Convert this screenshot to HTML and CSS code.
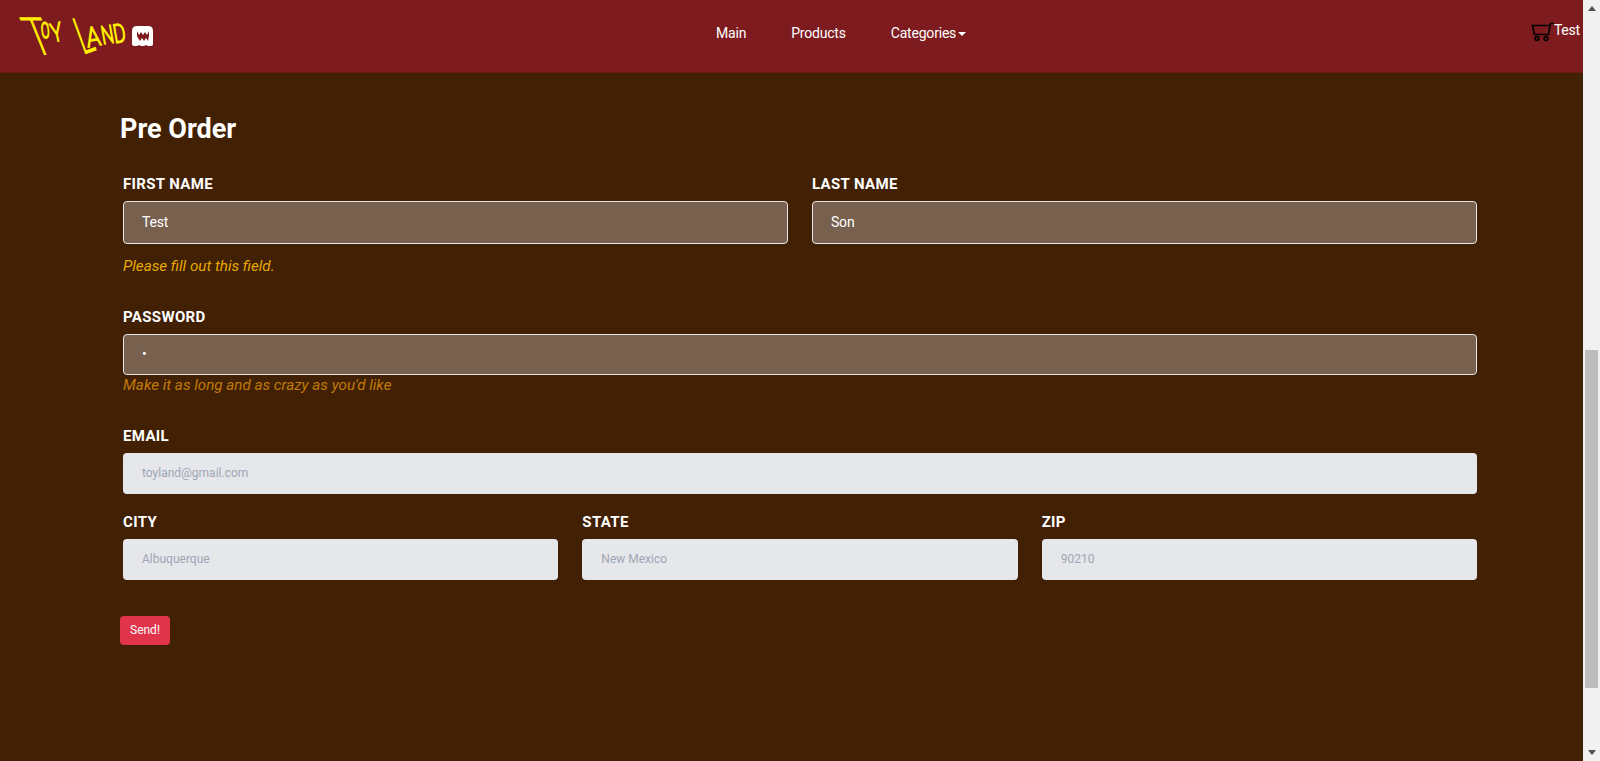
FILE: index.html
```html
<!DOCTYPE html>
<html>
<head>
	<meta charset="utf-8">
	<meta name="viewport" content="width=device-width, initial-scale=1">
	<title>Toy Land</title>
	<link rel="stylesheet" href="styles.css">
</head>
<body>

<div class="page">
	<nav class="navbar">
		<a class="logo" href="#">
			<svg width="160" height="72" viewBox="0 0 160 72">
				<g class="logo-text">
					<text transform="translate(33.700 54) skewX(22) scale(3.100 4.200)">T</text>
					<text transform="translate(42 38) rotate(-6) scale(1 1.750)">O</text>
					<text transform="translate(53 42) rotate(-12) scale(1.500 2.100)">Y</text>
					<text transform="translate(83 54) rotate(-20) scale(2.300 4.200)">L</text>
					<text transform="translate(88 47) rotate(-10) scale(1.900 2.200)">A</text>
					<text transform="translate(103 44) rotate(-10) scale(1.400 2)">N</text>
					<text transform="translate(115 43) rotate(-10) scale(1.500 2.100)">D</text>
				</g>
				<path d="M132 31 q0 -5 5 -5 h11 q5 0 5 5 v13 q0 2 -2 2 h-3 l-2 -1 -2 1 h-3 l-2 -1 -2 1 h-3 q-2 0 -2 -2 z" fill="#fff"/>
				<path d="M137 31 l2 4 2 -3 2 3 2 -3 2 3 2 -4 v5 l-1 5 -2 -3 -2 3 -2 -3 -2 3 -2 -3 -1 -2 z" fill="#7e1b1e"/>
			</svg>
		</a>
		<ul class="nav-links">
			<li><a href="#">Main</a></li>
			<li><a href="#">Products</a></li>
			<li><a href="#">Categories <span class="caret"></span></a></li>
		</ul>
		<div class="user">
			<svg width="23" height="20" viewBox="0 0 23 20" fill="none" stroke="#000" stroke-width="1.600">
				<path d="M23 1.500h-3.500l-2 11h-14l-2-9h18.200"/>
				<circle cx="6" cy="16.500" r="1.900"/>
				<circle cx="15" cy="16.500" r="1.900"/>
			</svg>
			<span>Test</span>
		</div>
	</nav>

	<main class="content">
		<h1>Pre Order</h1>
		<form>
			<div class="row first-row">
				<div class="field">
					<label>First Name</label>
					<input class="filled tall" type="text" value="Test">
					<p class="hint yellow">Please fill out this field.</p>
				</div>
				<div class="field">
					<label>Last Name</label>
					<input class="filled tall" type="text" value="Son">
				</div>
			</div>
			<div class="row password-row">
				<div class="field">
					<label>Password</label>
					<input class="filled" type="password" value="a">
					<p class="hint orange">Make it as long and as crazy as you'd like</p>
				</div>
			</div>
			<div class="row email-row">
				<div class="field">
					<label>Email</label>
					<input type="text" placeholder="toyland@gmail.com">
				</div>
			</div>
			<div class="row city-row">
				<div class="field">
					<label>City</label>
					<input type="text" placeholder="Albuquerque">
				</div>
				<div class="field">
					<label>State</label>
					<input type="text" placeholder="New Mexico">
				</div>
				<div class="field">
					<label>Zip</label>
					<input type="text" placeholder="90210">
				</div>
			</div>
			<button type="button">Send!</button>
		</form>
	</main>
</div>

<div class="scrollbar">
	<span class="arrow up"></span>
	<span class="thumb"></span>
	<span class="arrow down"></span>
</div>

</body>
</html>
```

FILE: styles.css
```css
* {
	box-sizing: border-box;
}
html, body {
	height: 100%;
}
body {
	font-family: Roboto, Arial, sans-serif;
	margin: 0;
	padding: 0;
	display: flex;
	overflow: hidden;
	background-color: #412004;
}
.page {
	flex: 1;
	min-width: 0;
}

/* navbar */
.navbar {
	height: 73px;
	background-color: #7e1b1e;
	border-bottom: 1px solid #6b1c14;
	display: flex;
	color: white;
}
.logo {
	display: block;
	width: 160px;
	height: 72px;
}
.logo-text text {
	font-family: Roboto, Arial, sans-serif;
	font-size: 12px;
	font-weight: 100;
	fill: #ffee00;
	stroke: #ffee00;
	stroke-width: 1.8px;
	vector-effect: non-scaling-stroke;
}
.nav-links {
	list-style: none;
	display: flex;
	gap: 45px;
	margin: 24px 0 0 556px;
	padding: 0;
	font-size: 14px;
	letter-spacing: -.2px;
	font-weight: 400;
	line-height: 18px;
}
.nav-links a {
	color: white;
	text-decoration: none;
}
.caret {
	display: inline-block;
	vertical-align: 2px;
	margin-left: -1px;
	border-top: 4px solid white;
	border-left: 4.5px solid transparent;
	border-right: 4.5px solid transparent;
}
.user {
	margin-left: auto;
	margin-right: 3px;
	padding-top: 21px;
	display: flex;
	align-items: flex-start;
	font-size: 14px;
	letter-spacing: -.2px;
	line-height: 18px;
}
.user svg {
	margin-top: 1px;
}

/* form */
.content {
	padding: 40px 106px 0 120px;
}
h1 {
	margin: 0 0 29px;
	font-size: 27px;
	line-height: 32px;
	font-weight: 700;
	color: white;
}
form {
	display: flex;
	flex-direction: column;
}
.row {
	display: flex;
	gap: 24px;
	padding-left: 3px;
}
.field {
	flex: 1;
	min-width: 0;
}
label {
	display: block;
	margin-bottom: 7px;
	font-size: 15px;
	line-height: 20px;
	font-weight: 700;
	letter-spacing: .35px;
	text-transform: uppercase;
	color: white;
}
input {
	display: block;
	width: 100%;
	height: 41px;
	padding: 0 19px 2px;
	font-family: Roboto, Arial, sans-serif;
	font-size: 12px;
	color: #4a5568;
	background-color: #e5e7eb;
	border: 0;
	border-radius: 4px;
}
input::placeholder {
	color: #a0a6b4;
}
input.filled {
	background-color: #78604f;
	color: white;
	border: 1px solid #e6e6e6;
	padding: 0 18px 2px;
	font-size: 14px;
	letter-spacing: -.2px;
}
input.tall {
	height: 43px;
}
.hint {
	margin: 0;
	font-size: 15.2px;
	line-height: 20px;
	font-style: italic;
}
.yellow {
	color: #e7a900;
	margin-top: 12px;
}
.orange {
	color: #c27a08;
}
.first-row {
	height: 133px;
}
.password-row {
	height: 119px;
}
.email-row {
	height: 86px;
}
.city-row {
	height: 104px;
}
button {
	align-self: flex-start;
	width: 50px;
	height: 29px;
	padding: 0 0 1px;
	font-family: Roboto, Arial, sans-serif;
	font-size: 12px;
	font-weight: 400;
	color: white;
	background-color: #e0344b;
	border: 0;
	border-radius: 4px;
}

/* scrollbar */
.scrollbar {
	width: 17px;
	background-color: #f1f1f1;
	display: flex;
	flex-direction: column;
	align-items: center;
	padding: 6px 0;
}
.thumb {
	width: 13px;
	height: 338px;
	margin-top: 339px;
	background-color: #bdbdbd;
}
.arrow {
	border-left: 4px solid transparent;
	border-right: 4px solid transparent;
}
.arrow.up {
	border-bottom: 5px solid #505050;
}
.arrow.down {
	margin-top: auto;
	border-top: 5px solid #505050;
}
```
